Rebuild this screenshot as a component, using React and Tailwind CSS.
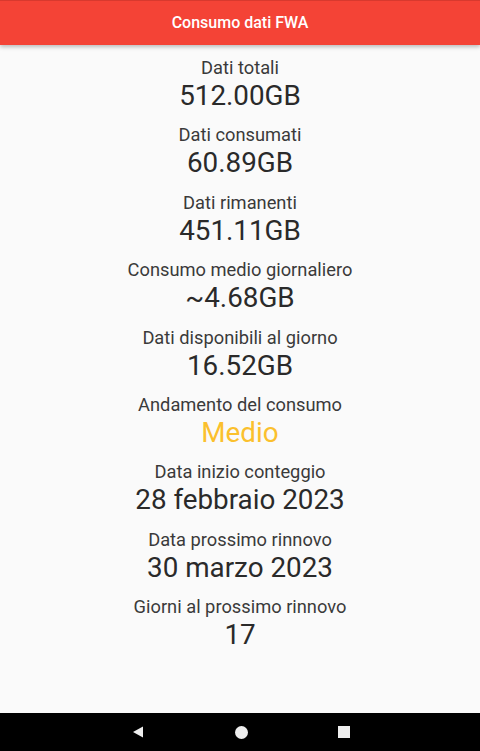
import React from 'react';

const rows = [
  { label: 'Dati totali', value: '512.00GB' },
  { label: 'Dati consumati', value: '60.89GB' },
  { label: 'Dati rimanenti', value: '451.11GB' },
  { label: 'Consumo medio giornaliero', value: '~4.68GB' },
  { label: 'Dati disponibili al giorno', value: '16.52GB' },
  { label: 'Andamento del consumo', value: 'Medio', accent: true },
  { label: 'Data inizio conteggio', value: '28 febbraio 2023' },
  { label: 'Data prossimo rinnovo', value: '30 marzo 2023' },
  { label: 'Giorni al prossimo rinnovo', value: '17' },
];

const App = () => {
  return (
    <div className="flex h-[751px] flex-col bg-[#fafafa] font-['Roboto',sans-serif]">
      {/* App bar */}
      <header className="relative z-10 flex h-[45px] shrink-0 items-center justify-center border-t border-[#d8392e] bg-[#f44336] shadow-[0_2px_4px_rgba(0,0,0,0.25)]">
        <h1 className="text-[16px] font-medium text-white">Consumo dati FWA</h1>
      </header>

      {/* Stats */}
      <main className="flex flex-1 flex-col items-center pt-[12px]">
        {rows.map((row) => (
          <div key={row.label} className="flex h-[67.4px] flex-col items-center">
            <span className="text-[18.3px] leading-[22px] text-[#3a3a3a]">{row.label}</span>
            <span
              className={`mt-[1px] text-[27.8px] leading-[32px] ${
                row.accent ? 'text-[#fbc02d]' : 'text-[#2a2a2a]'
              }`}
            >
              {row.value}
            </span>
          </div>
        ))}
      </main>

      {/* Android nav bar */}
      <nav className="flex h-[38px] shrink-0 items-center justify-center gap-[90px] bg-black">
        <svg width="14" height="14" viewBox="0 0 14 14">
          <path d="M12 1.5 L12 12.5 L2 7 Z" fill="#eeeeee" />
        </svg>
        <div className="h-[13px] w-[13px] rounded-full bg-[#eeeeee]" />
        <div className="h-[12px] w-[12px] bg-[#eeeeee]" />
      </nav>
    </div>
  );
};

export default App;
